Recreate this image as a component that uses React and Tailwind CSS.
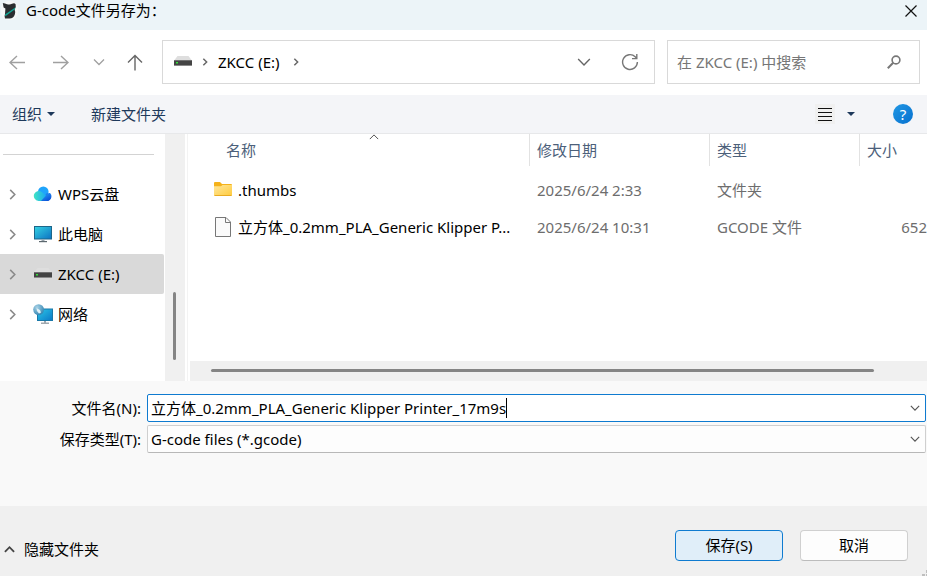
import React from "react";

function Chevron({ dir = "down", size = 12, className = "", stroke = 1.3 }) {
  const paths = {
    down: "M1 3.5 L6 8.5 L11 3.5",
    up: "M1 8.5 L6 3.5 L11 8.5",
    right: "M3.5 1 L8.5 6 L3.5 11",
  };
  return (
    <svg width={size} height={size} viewBox="0 0 12 12" fill="none" stroke="currentColor" strokeWidth={stroke} className={className} aria-hidden="true">
      <path d={paths[dir]} />
    </svg>
  );
}

function Arrow({ dir }) {
  const paths = {
    left: "M16 8.5 H1 M8 2 L1 8.5 L8 15",
    right: "M0 8.5 H15 M8 2 L15 8.5 L8 15",
    up: "M8 16.5 V1.5 M1 8.5 L8 1.5 L15 8.5",
  };
  return (
    <svg width="16" height="17" viewBox="0 0 16 17" fill="none" stroke="currentColor" strokeWidth="1.4" aria-hidden="true">
      <path d={paths[dir]} />
    </svg>
  );
}

function AppLogo() {
  return (
    <svg width="18" height="20" viewBox="0 0 18 20" aria-hidden="true">
      <rect x="0" y="1" width="17" height="19" rx="8" fill="#f6f8f9" />
      <path d="M1.8 3 L4 3.6 L6 4.2 Q9 5 11 3.8 Q13.5 2.6 14.6 4.2 Q15.4 6.5 13.6 9.6 Q14.6 11.5 13.8 14.5 Q12.6 18.4 8.5 18.6 L4 18.4 Q3 16.5 4 14 L4.4 8.5 L2.6 7.4 Z" fill="#2b2e31" />
      <path d="M4 14.6 L14.6 7.2 L13.6 9.6 L4.4 16.2 Z" fill="#12a594" />
    </svg>
  );
}

function DriveIcon() {
  return (
    <svg width="20" height="20" viewBox="0 0 20 20" aria-hidden="true">
      <path d="M4.5 4 H15.5 L18.5 8 H1.5 Z" fill="#dedede" />
      <rect x="1" y="8" width="18" height="6" rx="0.6" fill="#444" />
      <rect x="1" y="8" width="18" height="1" fill="#707070" />
      <rect x="1" y="13" width="18" height="1" fill="#8a8a8a" />
      <rect x="3" y="10" width="2" height="1.5" fill="#35e03b" />
    </svg>
  );
}

function CloudIcon() {
  return (
    <svg width="20" height="20" viewBox="0 0 20 20" aria-hidden="true">
      <defs>
        <linearGradient id="cloudLeft" x1="0" y1="0" x2="1" y2="0">
          <stop offset="0" stopColor="#3fe3c4" />
          <stop offset="1" stopColor="#19a5f5" />
        </linearGradient>
        <linearGradient id="cloudRight" x1="0" y1="0" x2="0.7" y2="1">
          <stop offset="0" stopColor="#2aa6ff" />
          <stop offset="1" stopColor="#0a4fd6" />
        </linearGradient>
      </defs>
      <circle cx="10.3" cy="7.8" r="5.3" fill="#1fa4fb" />
      <path d="M8 17 L14 8.5 A5 4.9 0 0 1 15 17 Z" fill="url(#cloudRight)" />
      <path d="M5.5 17 A5 5 0 1 1 9.5 8.6 L14 12.5 L9 17 Z" fill="url(#cloudLeft)" />
      <path d="M8 17 L13.5 11 C15 9.5 16 9 17 9 A4.8 4.8 0 0 1 15 17 Z" fill="url(#cloudRight)" />
    </svg>
  );
}

function MonitorIcon() {
  return (
    <svg width="20" height="20" viewBox="0 0 20 20" aria-hidden="true">
      <defs>
        <linearGradient id="screen" x1="0" y1="0" x2="1" y2="1">
          <stop offset="0" stopColor="#35d3e3" />
          <stop offset="1" stopColor="#0c71c2" />
        </linearGradient>
      </defs>
      <rect x="1.5" y="2.5" width="17" height="12.5" fill="url(#screen)" stroke="#1d6689" />
      <rect x="8.5" y="15.5" width="3" height="1.8" fill="#9aa5ad" />
      <rect x="6" y="17" width="8" height="1.2" fill="#5d686f" />
    </svg>
  );
}

function NetworkIcon() {
  return (
    <svg width="20" height="20" viewBox="0 0 20 20" aria-hidden="true">
      <defs>
        <linearGradient id="netScreen" x1="0" y1="0" x2="1" y2="1">
          <stop offset="0" stopColor="#2cc7e6" />
          <stop offset="1" stopColor="#0b79c8" />
        </linearGradient>
        <radialGradient id="globe" cx="0.35" cy="0.3" r="0.8">
          <stop offset="0" stopColor="#a8d2e6" />
          <stop offset="1" stopColor="#2a7fae" />
        </radialGradient>
      </defs>
      <rect x="4.5" y="5" width="15" height="11.5" fill="url(#netScreen)" stroke="#1a78a8" />
      <rect x="11" y="17" width="2" height="1.8" fill="#9aa5ad" />
      <rect x="8" y="18.6" width="8" height="1.2" fill="#8a959c" />
      <circle cx="5.6" cy="5.6" r="5.4" fill="url(#globe)" />
      <path d="M3.5 4 L7 6 L8 8.5 L6 9.5 L4 7 Z" fill="#e3f1f7" />
    </svg>
  );
}

function FolderIcon() {
  return (
    <svg width="18" height="20" viewBox="0 0 18 20" aria-hidden="true">
      <defs>
        <linearGradient id="folder" x1="0" y1="0" x2="1" y2="1">
          <stop offset="0" stopColor="#ffe79c" />
          <stop offset="1" stopColor="#ffcb3d" />
        </linearGradient>
      </defs>
      <path d="M0 3 Q0 2 1 2 H6 L8 4 H17 Q18 4 18 5 V9 H0 Z" fill="#f5b21a" />
      <path d="M0 6.2 H7 L8.5 5 H18 V15 Q18 16 17 16 H1 Q0 16 0 15 Z" fill="url(#folder)" />
      <path d="M0.5 15.5 H17.5" stroke="#e9ab22" />
    </svg>
  );
}

function FileIcon() {
  return (
    <svg width="18" height="20" viewBox="0 0 18 20" fill="none" stroke="#777" aria-hidden="true">
      <path d="M1.5 0.5 H12 L16.5 5 V19.5 H1.5 Z" fill="#fafafa" />
      <path d="M11.5 0.5 V5.5 H16.5" />
    </svg>
  );
}

function DropTriangle() {
  return (
    <svg width="8" height="4" viewBox="0 0 8 4" aria-hidden="true">
      <path d="M0 0 H8 L4 4 Z" fill="#1e395b" />
    </svg>
  );
}

const places = [
  { name: "WPS云盘", Icon: CloudIcon },
  { name: "此电脑", Icon: MonitorIcon },
  { name: "ZKCC (E:)", Icon: DriveIcon, selected: true },
  { name: "网络", Icon: NetworkIcon },
];

const files = [
  { name: ".thumbs", date: "2025/6/24 2:33", type: "文件夹", size: "", Icon: FolderIcon },
  { name: "立方体_0.2mm_PLA_Generic Klipper P...", date: "2025/6/24 10:31", type: "GCODE 文件", size: "652", Icon: FileIcon },
];

function TitleBar() {
  return (
    <header className="flex h-[30px] items-start justify-between bg-[#ecf4f8] pr-[7px] pl-px">
      <div className="flex items-center gap-[7px]">
        <AppLogo />
        <h1>G-code文件另存为：</h1>
      </div>
      <button aria-label="关闭" className="flex h-[22px] w-[18px] items-center justify-center">
        <svg width="12" height="12" viewBox="0 0 12 12" stroke="#111" strokeWidth="1.2" aria-hidden="true">
          <path d="M0.5 0.5 L11.5 11.5 M11.5 0.5 L0.5 11.5" />
        </svg>
      </button>
    </header>
  );
}

function NavBar() {
  return (
    <nav className="flex items-center gap-3 bg-white pt-[10px] pr-[7px] pb-[11px] pl-[9px]">
      <div className="flex w-[141px] shrink-0 items-center">
        <button aria-label="后退" className="mr-7 text-[#a0a0a0]"><Arrow dir="left" /></button>
        <button aria-label="前进" className="mr-6 text-[#a0a0a0]"><Arrow dir="right" /></button>
        <button aria-label="最近的位置" className="mr-[22px] text-[#a0a0a0]"><Chevron size={12} /></button>
        <button aria-label="上移" className="text-[#666]"><Arrow dir="up" /></button>
      </div>
      <div className="flex h-[44px] min-w-0 flex-1 items-center border border-[#d9d9d9] pr-[15px] pl-[10px]">
        <DriveIcon />
        <Chevron dir="right" size={8} stroke={2.2} className="mr-[9px] ml-2 text-[#666]" />
        <button className="pb-px">ZKCC (E:)</button>
        <Chevron dir="right" size={8} stroke={2.2} className="ml-3 text-[#666]" />
        <button aria-label="以前的位置" className="ml-auto text-[#666]"><Chevron size={14} stroke={1.2} /></button>
        <button aria-label="刷新" className="ml-[30px] text-[#777]">
          <svg width="18" height="18" viewBox="0 0 18 18" fill="none" stroke="currentColor" strokeWidth="1.4" aria-hidden="true">
            <path d="M16.4 9 A7.4 7.4 0 1 1 14.2 3.8 L15.5 5.2 M15.8 1 V5.6 H11" />
          </svg>
        </button>
      </div>
      <label className="flex h-[44px] w-[253px] shrink-0 items-center border border-[#d9d9d9] pr-[18px] pl-[9px]">
        <input type="search" aria-label="搜索" placeholder="在 ZKCC (E:) 中搜索" className="min-w-0 flex-1 bg-transparent outline-none placeholder:text-[#767676]" />
        <svg width="14" height="14" viewBox="0 0 14 14" fill="none" stroke="#777" aria-hidden="true">
          <circle cx="9" cy="5" r="3.9" strokeWidth="1.6" />
          <path d="M6.2 7.8 L0.8 13.2" strokeWidth="2" />
        </svg>
      </label>
    </nav>
  );
}

function Toolbar() {
  return (
    <div className="flex h-[39px] items-center border-b border-[#e7e8ea] bg-[#f4f5f8] pr-[14px] pl-3 text-[#1e395b]">
      <button className="mr-9 flex items-center gap-[5px]">组织 <DropTriangle /></button>
      <button>新建文件夹</button>
      <button aria-label="更改视图" className="ml-auto flex size-5 items-center justify-center bg-[#f0f0f0]">
        <svg width="14" height="13" viewBox="0 0 14 13" stroke="#111" aria-hidden="true">
          <path d="M0 0.5 H14 M0 4.5 H14 M0 8.5 H14 M0 12.5 H14" />
        </svg>
      </button>
      <button aria-label="更多选项" className="ml-3"><DropTriangle /></button>
      <button aria-label="帮助" className="ml-[38px] flex size-5 items-center justify-center rounded-full bg-linear-to-br from-[#2298e4] to-[#0670cf] text-white">
        ?
      </button>
    </div>
  );
}

function Sidebar() {
  return (
    <aside className="flex w-[185px] shrink-0">
      <div className="min-w-0 flex-1 pr-px">
        <hr className="mt-5 mr-[10px] mb-[19px] ml-[3px] border-[#d3d3d3]" />
        <ul>
          {places.map(({ name, Icon, selected }) => (
            <li key={name}>
              <button className={selected ? "flex h-10 w-full items-center rounded-r-xs bg-[#d9d9d9] pl-[7px]" : "flex h-10 w-full items-center pl-[7px]"}>
                <Chevron dir="right" size={11} stroke={1.7} className="mr-[15px] text-[#8a8a8a]" />
                <Icon />
                <span className="ml-[5px]">{name}</span>
              </button>
            </li>
          ))}
        </ul>
      </div>
      <div className="flex w-5 flex-col items-center justify-end bg-[#f0f0f0] pr-px pb-[21px]">
        <div className="h-[68px] w-[3px] rounded-full bg-[#858585]" />
      </div>
    </aside>
  );
}

function HeaderCell({ children, className = "", inner }) {
  return (
    <th scope="col" className={`relative p-0 text-left align-top font-normal text-[#4c607a] ${className}`}>
      <div className={inner}>{children}</div>
    </th>
  );
}

function FileList() {
  return (
    <section className="ml-[2px] flex min-w-0 flex-1 flex-col border-l border-[#f3f3f3] pl-[2px]">
      <div className="flex-1 overflow-hidden">
        <table className="w-full table-fixed border-collapse">
          <thead>
            <tr className="h-[37px]">
              <HeaderCell inner="flex h-8 items-center pl-9">
                名称
                <Chevron dir="up" size={10} stroke={1.2} className="absolute top-[-2px] left-[179px] text-[#555]" />
              </HeaderCell>
              <HeaderCell className="w-[180px]" inner="flex h-8 items-center border-l border-[#e2e2e2] pl-[7px]">修改日期</HeaderCell>
              <HeaderCell className="w-[150px]" inner="flex h-8 items-center border-l border-[#e2e2e2] pl-[7px]">类型</HeaderCell>
              <HeaderCell className="w-[68px]" inner="flex h-8 items-center border-l border-[#e2e2e2] pl-[7px]">大小</HeaderCell>
            </tr>
          </thead>
          <tbody className="text-[#6d6d6d]">
            {files.map(({ name, date, type, size, Icon }) => (
              <tr key={name} className="h-[37px]">
                <td className="p-0">
                  <div className="flex items-center gap-[6px] pl-6 text-black">
                    <span className="shrink-0"><Icon /></span>
                    <span className="whitespace-nowrap">{name}</span>
                  </div>
                </td>
                <td className="p-0 pl-2">{date}</td>
                <td className="p-0 pl-2">{type}</td>
                <td className="p-0 text-right">{size}</td>
              </tr>
            ))}
          </tbody>
        </table>
      </div>
      <div className="flex h-5 items-center bg-[#f0f0f0] pr-[53px] pb-px pl-[21px]">
        <div className="h-[3px] w-full rounded-full bg-[#858585]" />
      </div>
    </section>
  );
}

function SaveForm() {
  return (
    <div className="grid grid-cols-[141px_1fr] items-center gap-x-[6px] gap-y-[3px] bg-[#f9f9f9] pt-[13px] pr-px pb-[53px]">
      <label htmlFor="filename" className="text-right">文件名(N):</label>
      <div className="flex h-[28px] items-center rounded-xs border border-[#0f7bd0] bg-white pr-[5px] pl-[3px]">
        <input id="filename" type="text" defaultValue="立方体_0.2mm_PLA_Generic Klipper Printer_17m9s" className="max-w-full [field-sizing:content] bg-transparent pb-px outline-none" />
        <span className="h-5 w-px bg-black" />
        <button aria-label="以前的文件名" className="ml-auto text-[#555]"><Chevron size={10} stroke={1.4} /></button>
      </div>
      <label htmlFor="filetype" className="text-right">保存类型(T):</label>
      <div className="relative flex h-[28px] items-center rounded-xs border border-[#cfcfcf] border-b-[#b8b8b8] bg-[#fdfdfd]">
        <select id="filetype" className="w-full appearance-none bg-transparent pl-[3px] outline-none">
          <option>G-code files (*.gcode)</option>
        </select>
        <Chevron size={10} stroke={1.4} className="pointer-events-none absolute right-[5px] text-[#555]" />
      </div>
    </div>
  );
}

function Footer() {
  return (
    <footer className="relative flex items-end bg-[#f0f0f0] pt-6 pr-[19px] pb-[15px] pl-1">
      <button className="mr-auto flex h-6 items-center gap-[9px]">
        <Chevron dir="up" size={11} stroke={2} className="text-[#444]" />
        隐藏文件夹
      </button>
      <button className="h-[31px] w-[108px] rounded-sm border border-[#0f7bd0] bg-[#e0eef9] pb-px">保存(S)</button>
      <button className="ml-[17px] h-[31px] w-[108px] rounded-sm border border-[#d0d0d0] border-b-[#bcbcbc] bg-[#fdfdfd] pb-px">取消</button>
      <svg width="5" height="6" viewBox="0 0 5 6" fill="#bfbfbf" className="absolute right-0 bottom-0" aria-hidden="true">
        <path d="M4 0 H5 V3 H4 Z M0 4 H3 V6 H0 Z M4 4 H5 V6 H4 Z" />
      </svg>
    </footer>
  );
}

export default function App() {
  return (
    <div lang="zh-CN" className="flex min-h-screen flex-col bg-white font-['Noto_Sans','Noto_Sans_CJK_SC',sans-serif] text-[15px] leading-5 text-black">
      <TitleBar />
      <NavBar />
      <Toolbar />
      <main className="flex flex-1">
        <Sidebar />
        <FileList />
      </main>
      <SaveForm />
      <Footer />
    </div>
  );
}
